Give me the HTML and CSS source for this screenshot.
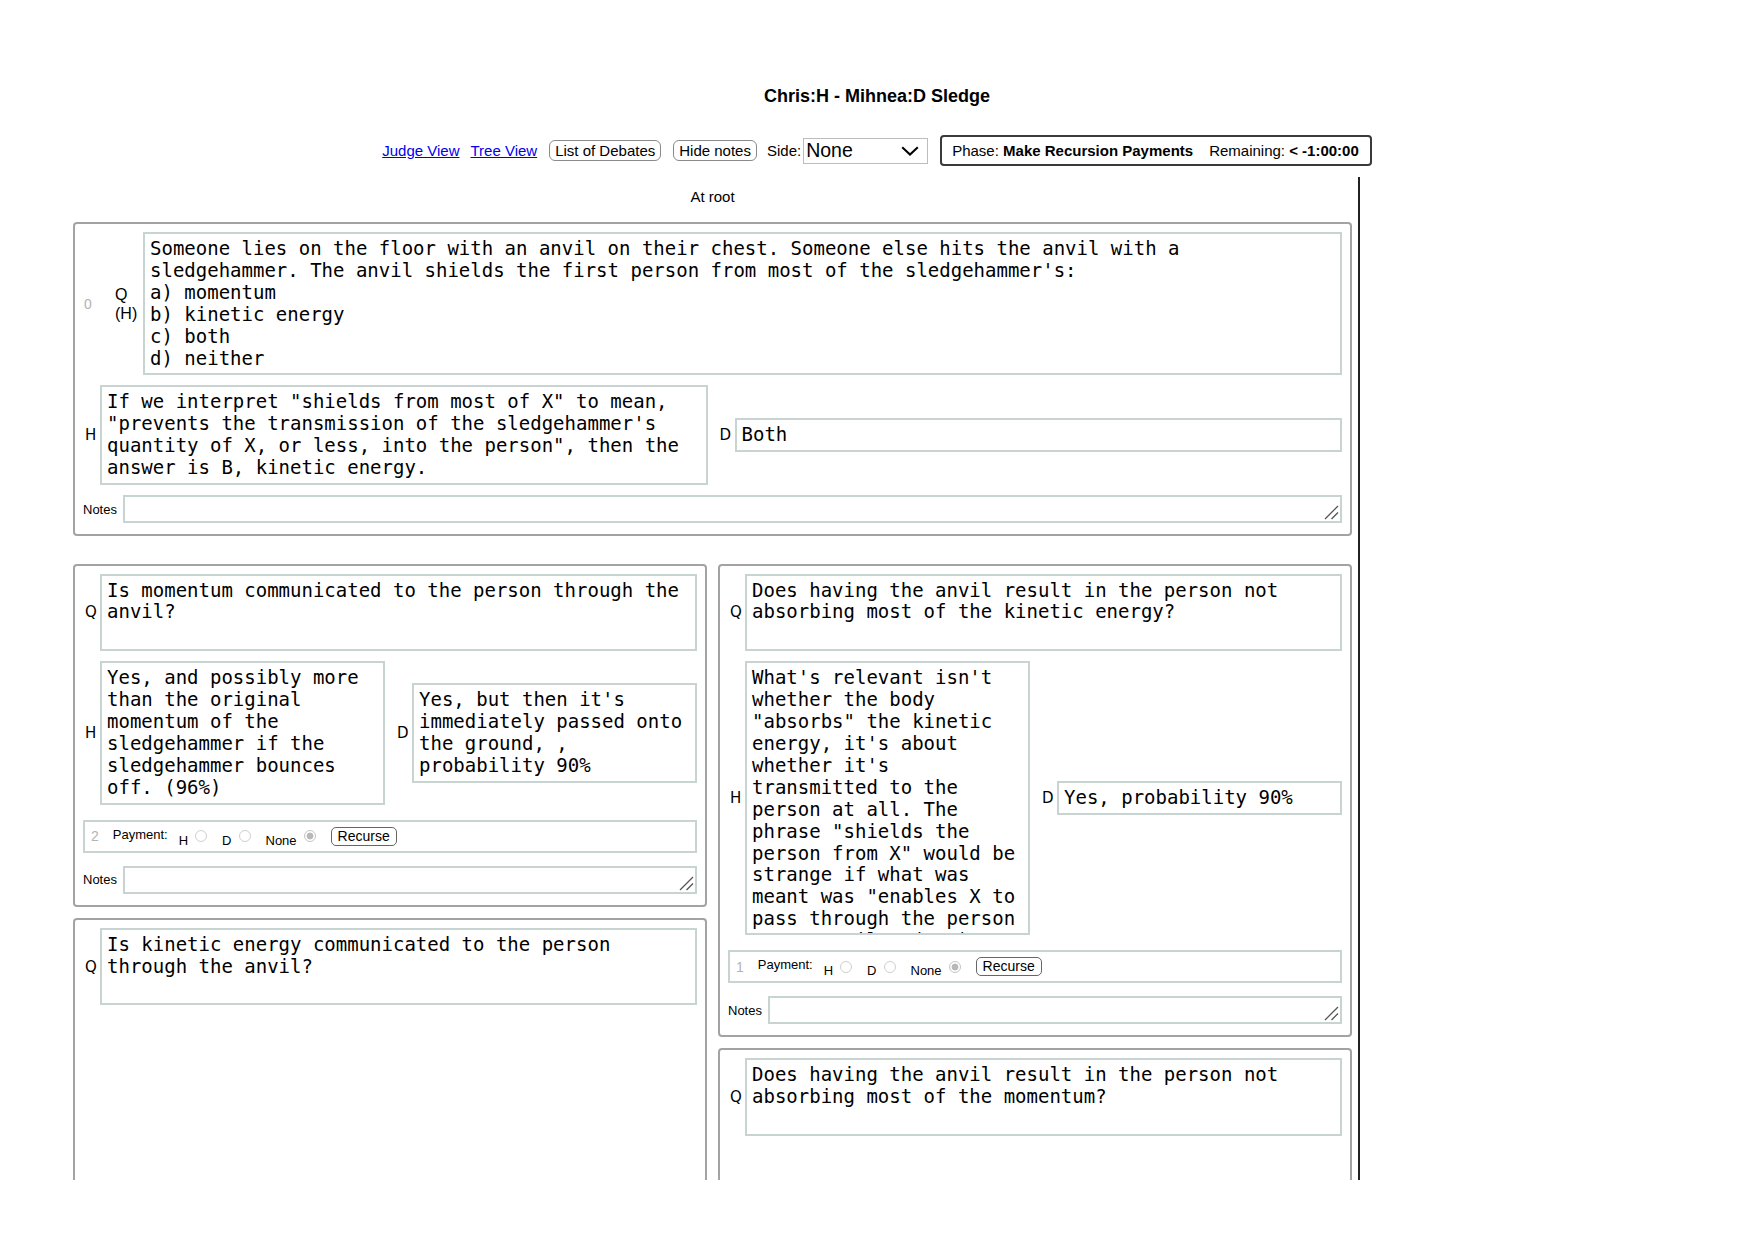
FILE: index.html
```html
<!DOCTYPE html>
<html>
<head>
<meta charset="utf-8">
<title>Chris:H - Mihnea:D Sledge</title>
<link rel="stylesheet" href="styles.css">
</head>
<body>
<h1 class="title">Chris:H - Mihnea:D Sledge</h1>
<div class="toolbar">
  <a href="#" class="link">Judge View</a>
  <a href="#" class="link link-tree">Tree View</a>
  <button class="btn">List of Debates</button>
  <button class="btn">Hide notes</button>
  <div class="side">
    <span>Side:</span>
    <span class="select"><span>None</span><svg class="chev" width="18" height="10" viewBox="0 0 18 10"><path d="M1.2 1.2 L9 8.6 L16.8 1.2" fill="none" stroke="#000" stroke-width="2"/></svg></span>
  </div>
  <div class="phase">
    <span>Phase: <b>Make Recursion Payments</b></span>
    <span>Remaining: <b>&lt; -1:00:00</b></span>
  </div>
</div>

<div class="main">
  <div class="at-root">At root</div>

  <div class="card">
    <div class="qrow">
      <span class="num">0</span>
      <span class="qlabel">Q<br>(H)</span>
      <div class="box">Someone lies on the floor with an anvil on their chest. Someone else hits the anvil with a sledgehammer. The anvil shields the first person from most of the sledgehammer's:<br>a) momentum<br>b) kinetic energy<br>c) both<br>d) neither</div>
    </div>
    <div class="answers">
      <div class="ans"><span class="lbl">H</span><div class="box">If we interpret "shields from most of X" to mean, "prevents the transmission of the sledgehammer's quantity of X, or less, into the person", then the answer is B, kinetic energy.</div></div>
      <div class="ans"><span class="lbl">D</span><div class="box">Both</div></div>
    </div>
    <div class="notes"><span class="notes-label">Notes</span><div class="ta-wrap"><textarea></textarea><svg class="grip" width="16" height="16" viewBox="0 0 16 16"><path d="M2 15 L15 2 M8.5 15 L15 8.5" stroke="#555" stroke-width="1.3" fill="none"/></svg></div></div>
  </div>

  <div class="children">
    <div class="col">
      <div class="card">
        <div class="qrow">
          <span class="lbl">Q</span>
          <div class="box q">Is momentum communicated to the person through the anvil?</div>
        </div>
        <div class="answers">
          <div class="ans"><span class="lbl">H</span><div class="box">Yes, and possibly more than the original momentum of the sledgehammer if the sledgehammer bounces off. (96%)</div></div>
          <div class="ans"><span class="lbl">D</span><div class="box">Yes, but then it's immediately passed onto the ground, , probability 90%</div></div>
        </div>
        <div class="payment">
          <span class="pnum">2</span>
          <span class="plabel">Payment:</span>
          <span class="opt"><span class="opt-label">H</span><span class="radio"></span></span>
          <span class="opt"><span class="opt-label">D</span><span class="radio"></span></span>
          <span class="opt"><span class="opt-label">None</span><span class="radio checked"></span></span>
          <button class="recurse">Recurse</button>
        </div>
        <div class="notes"><span class="notes-label">Notes</span><div class="ta-wrap"><textarea></textarea><svg class="grip" width="16" height="16" viewBox="0 0 16 16"><path d="M2 15 L15 2 M8.5 15 L15 8.5" stroke="#555" stroke-width="1.3" fill="none"/></svg></div></div>
      </div>

      <div class="card tall">
        <div class="qrow">
          <span class="lbl">Q</span>
          <div class="box q">Is kinetic energy communicated to the person through the anvil?</div>
        </div>
      </div>
    </div>

    <div class="col">
      <div class="card">
        <div class="qrow">
          <span class="lbl">Q</span>
          <div class="box q">Does having the anvil result in the person not absorbing most of the kinetic energy?</div>
        </div>
        <div class="answers">
          <div class="ans"><span class="lbl">H</span><div class="box clip">What's relevant isn't whether the body "absorbs" the kinetic energy, it's about whether it's transmitted to the person at all. The phrase "shields the person from X" would be strange if what was meant was "enables X to pass through the person as an anvil." (98%)</div></div>
          <div class="ans"><span class="lbl">D</span><div class="box">Yes, probability 90%</div></div>
        </div>
        <div class="payment">
          <span class="pnum">1</span>
          <span class="plabel">Payment:</span>
          <span class="opt"><span class="opt-label">H</span><span class="radio"></span></span>
          <span class="opt"><span class="opt-label">D</span><span class="radio"></span></span>
          <span class="opt"><span class="opt-label">None</span><span class="radio checked"></span></span>
          <button class="recurse">Recurse</button>
        </div>
        <div class="notes"><span class="notes-label">Notes</span><div class="ta-wrap"><textarea></textarea><svg class="grip" width="16" height="16" viewBox="0 0 16 16"><path d="M2 15 L15 2 M8.5 15 L15 8.5" stroke="#555" stroke-width="1.3" fill="none"/></svg></div></div>
      </div>

      <div class="card tall">
        <div class="qrow">
          <span class="lbl">Q</span>
          <div class="box q">Does having the anvil result in the person not absorbing most of the momentum?</div>
        </div>
      </div>
    </div>
  </div>
</div>
</body>
</html>
```

FILE: styles.css
```css
* { box-sizing: border-box; }

body {
  margin: 0;
  font-family: "Liberation Sans", Arial, sans-serif;
  color: #000;
  background: #fff;
}

.title {
  margin: 0;
  padding-top: 86px;
  font-size: 18px;
  line-height: 21px;
  font-weight: bold;
  text-align: center;
}

.toolbar {
  margin-top: 28px;
  height: 31px;
  display: flex;
  justify-content: center;
  align-items: center;
  gap: 12px;
  font-size: 15px;
}

.link {
  color: #0000ee;
  text-decoration: underline;
}

.link-tree { margin-left: -1px; }

.btn {
  font: 15px "Liberation Sans", Arial, sans-serif;
  height: 21px;
  padding: 0 5px;
  border: 1px solid #8a8a8a;
  border-radius: 6px;
  background: #fff;
  color: #000;
  line-height: 19px;
}

.side {
  display: flex;
  align-items: center;
  gap: 2px;
  margin-left: -2px;
}

.select {
  width: 125px;
  height: 26px;
  border: 1px solid #bdbdbd;
  display: flex;
  align-items: center;
  justify-content: space-between;
  padding: 0 8px 0 2px;
  font-size: 19.5px;
}

.chev { display: block; }

.phase {
  height: 31px;
  border: 2px solid #3a3a3a;
  border-radius: 4px;
  padding: 0 11px 0 10px;
  display: flex;
  align-items: center;
  gap: 16px;
}

.main {
  margin-top: 11px;
  margin-left: 65px;
  width: 1295px;
  height: 1003px;
  overflow: hidden;
  border-right: 2px solid #222;
  padding: 0 6px 0 8px;
}

.at-root {
  text-align: center;
  font-size: 15px;
  line-height: 17px;
  padding-top: 11px;
  margin-bottom: 17px;
}

.card {
  border: 2px solid #a3a3a3;
  border-radius: 4px;
  padding: 8px 8px 11px;
  background: #fff;
}

.card.tall { min-height: 320px; }

.qrow {
  display: flex;
  align-items: center;
}

.num {
  width: 32px;
  padding-left: 1px;
  color: #b3b3b3;
  font-size: 14px;
  flex: none;
}

.qlabel {
  width: 28px;
  text-align: left;
  font-size: 16px;
  line-height: 19px;
  flex: none;
}

.lbl {
  width: 17px;
  padding-left: 2px;
  flex: none;
  text-align: left;
  font: 15px "DejaVu Sans", sans-serif;
}

.box {
  flex: 1;
  min-width: 0;
  border: 2px solid #c8d4d2;
  padding: 4px 5px;
  font: 19px/21.9px "DejaVu Sans Mono", monospace;
  overflow-wrap: break-word;
  background: #fff;
}

.box.q { min-height: 77.7px; }

.box.clip {
  height: 274px;
  overflow: hidden;
}

.answers {
  display: grid;
  grid-template-columns: 1fr 1fr;
  gap: 10px;
  align-items: center;
  margin-top: 10px;
}

.ans {
  display: flex;
  align-items: center;
}

.payment {
  margin-top: 15px;
  height: 33px;
  border: 2px solid #c8d4d2;
  display: flex;
  align-items: center;
  padding-left: 6px;
  font-size: 13px;
}

.pnum {
  color: #b3b3b3;
  font-size: 14px;
  margin-right: 14px;
}

.plabel {
  margin-right: 11px;
  padding-bottom: 4px;
}

.opt {
  display: flex;
  align-items: center;
  margin-right: 15px;
}

.opt-label {
  padding-top: 8px;
  margin-right: 7px;
}

.radio {
  width: 12px;
  height: 12px;
  border: 1px solid #cfcfcf;
  border-radius: 50%;
  background: #fff;
}

.radio.checked {
  border-color: #c4c4c4;
  background: radial-gradient(circle, #b8b8b8 0 3px, #fff 3.8px);
}

.recurse {
  font: 14px "Liberation Sans", Arial, sans-serif;
  height: 19px;
  line-height: 17px;
  padding: 0 6px;
  border: 1px solid #666;
  border-radius: 5px;
  background: #fff;
  color: #000;
}

.notes {
  display: flex;
  align-items: center;
  margin-top: 10px;
}

.payment + .notes { margin-top: 13px; }

.notes-label {
  font-size: 13px;
  margin-right: 6px;
}

.ta-wrap {
  flex: 1;
  position: relative;
}

.ta-wrap textarea {
  display: block;
  width: 100%;
  height: 28px;
  border: 2px solid #c8d4d2;
  resize: none;
  background: #fff;
}

.grip {
  position: absolute;
  right: 3px;
  bottom: 3px;
}

.children {
  display: grid;
  grid-template-columns: 1fr 1fr;
  gap: 11px;
  margin-top: 27.5px;
  align-items: start;
}

.col {
  display: flex;
  flex-direction: column;
  gap: 11px;
}
```
